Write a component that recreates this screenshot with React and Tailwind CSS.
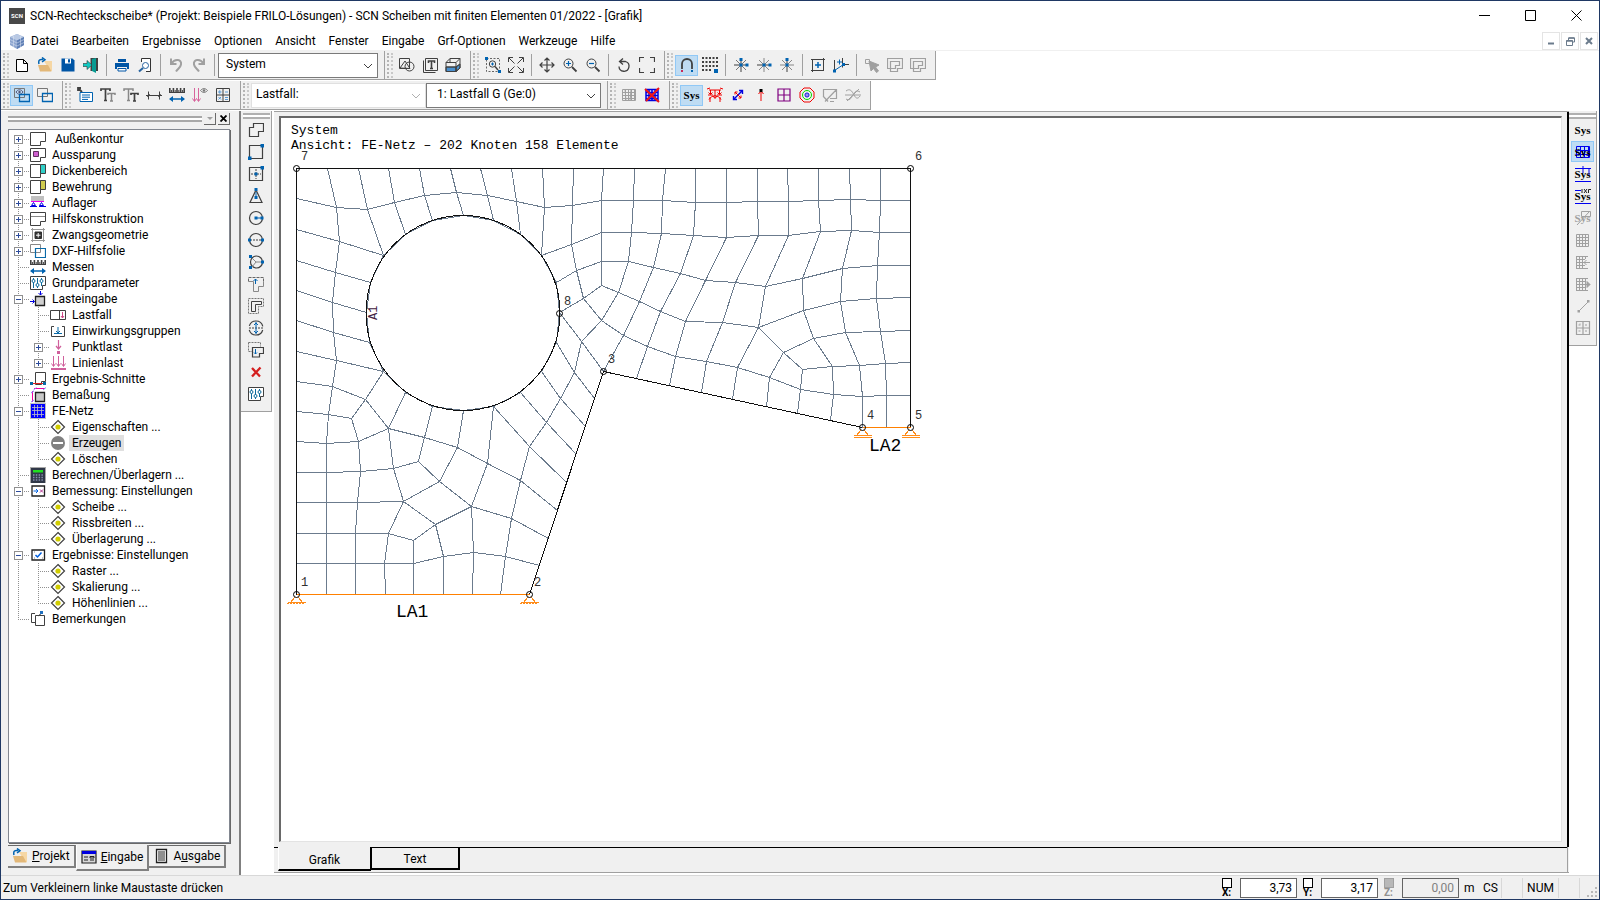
import { useState } from "react";
import clsx from "clsx";

const DARK = "#404040";
const BLUE = "#0063b1";
const GREY = "#a0a0a0";

const Svg = ({ children, stroke = DARK, size = 16 }) => (
  <svg
    width={size}
    height={size}
    viewBox="0 0 16 16"
    fill="none"
    stroke={stroke}
    strokeWidth="1"
    aria-hidden="true"
    className="shrink-0"
  >
    {children}
  </svg>
);

const SysIcon = ({ color = "#000", children }) => (
  <span className="relative flex h-5 w-5 items-center justify-center">
    {children}
    <span
      className="relative font-['Liberation_Serif',serif] text-[11px] leading-4 font-bold"
      style={{ color }}
    >
      Sys
    </span>
  </span>
);

const hash = (x, y, w, h, s) => {
  let d = `M${x} ${y}h${w}v${h}h${-w}z`;
  for (let i = s; i < w; i += s) d += `M${x + i} ${y}v${h}`;
  for (let i = s; i < h; i += s) d += `M${x} ${y + i}h${w}`;
  return d;
};

const plate = "M.5 1.5h15v9h-5v4h-10z";

/* file / view toolbar */
const icons = {
  fileNew: (
    <Svg stroke="#000">
      <path d="M2.500 2.500h7l4 4v8h-11zM9.500 2.500v4h4" fill="#fff" />
    </Svg>
  ),
  fileOpen: (
    <Svg stroke="none">
      <path d="M7 4h8v10h-2z" fill="#f6d7a4" />
      <path d="M1 8h10l3.500 6.500H3z" fill="#e3b878" />
      <path d="M2 7c-1-4 1-5 4-4.500M5 .5l3 2.200-3 2.300" stroke={BLUE} strokeWidth="1.500" />
    </Svg>
  ),
  save: (
    <Svg stroke="none">
      <path d="M1.500 1.500h11l2 2v11h-13z" fill="#0055a5" />
      <path d="M5 1.500h6v5H5z" fill="#fff" />
      <path d="M8 2.200h2v3.300H8z" fill="#0055a5" />
    </Svg>
  ),
  exit: (
    <Svg stroke="none">
      <path d="M7.500 1h7.500v13H7.500z" fill="#404040" />
      <path d="M9 2l4-1v15l-4-2z" fill="#089a92" />
      <path d="M0 6.500h4v-3l5 4.500-5 4.500v-3H0z" fill="#12c8c0" stroke="#333" strokeWidth=".6" />
    </Svg>
  ),
  print: (
    <Svg stroke="none">
      <path d="M4 2h8v3H4zM1 6h14v6h-2v-2H3v2H1z" fill="#0055a5" />
      <path d="M4 11.500h8v2.500H4z" stroke="#0055a5" fill="#fff" />
    </Svg>
  ),
  preview: (
    <Svg>
      <path d="M4.500 5V1.500h9v13H9" fill="#fff" stroke="#333" />
      <circle cx="8.500" cy="8.500" r="3" stroke="#2864a0" fill="#fff" />
      <path d="M6 11l-4 3.500" stroke="#2864a0" strokeWidth="2" />
    </Svg>
  ),
  undo: (
    <Svg stroke={GREY}>
      <path d="M3 1.500v5.500h5.500" strokeWidth="2" />
      <path d="M3.500 6.500C7 1 14 2.500 13 7.500c-.5 3-3 4-5 7" strokeWidth="2" />
    </Svg>
  ),
  redo: (
    <Svg stroke={GREY}>
      <path d="M13 1.500v5.500H7.500" strokeWidth="2" />
      <path d="M12.500 6.500C9 1 2 2.500 3 7.500c.5 3 3 4 5 7" strokeWidth="2" />
    </Svg>
  ),
  shapes: (
    <Svg>
      <path d="M.5 1.500h10v10H.5zM1 11L6 4l5 7.500z" />
      <circle cx="10.500" cy="9.500" r="4.500" />
    </Svg>
  ),
  textBox: (
    <Svg>
      <path d="M3.500 1.500h12v12h-12zM1.500 3.500v12h12" />
      <path d="M6.500 6v-2h6v2M9.500 4v7.500M8 11.500h3" strokeWidth="1.600" />
    </Svg>
  ),
  box3d: (
    <Svg>
      <path d="M1 10h10v4.500H1zM11 10l4-3v4l-4 3.500z" fill="#4a90cf" />
      <path d="M1 5.500h10v9H1zM1 5.500L5 1.500h10v9.500l-4 3.500M11 5.500l4-4M1 10h10l4-3M5 1.500v4" />
    </Svg>
  ),
  zoomWindow: (
    <Svg>
      <path d="M1.500 1.500h13v13h-13z" strokeDasharray="2 1.500" stroke="#666" />
      <circle cx="7.500" cy="7" r="3.200" />
      <path d="M7.500 5.500v3M6 7h3" stroke={BLUE} />
      <path d="M10 9.500l3 3.500" strokeWidth="1.500" />
      <path d="M0 0h3v3H0zM13 13h3v3h-3z" fill={BLUE} stroke="none" />
    </Svg>
  ),
  expand: (
    <Svg>
      <path d="M1 1l5.500 5.500M15 1L9.500 6.500M1 15l5.500-5.500M15 15L9.500 9.500M.5 5V.5H5M11 .5h4.500V5M.5 11v4.500H5M11 15.500h4.500V11" />
    </Svg>
  ),
  move: (
    <Svg>
      <path d="M8 1v14M1 8h14M5.500 3.500L8 1l2.500 2.500M5.500 12.500L8 15l2.500-2.500M3.500 5.500L1 8l2.500 2.500M12.500 5.500L15 8l-2.500 2.500" strokeWidth="1.200" />
    </Svg>
  ),
  zoomIn: (
    <Svg>
      <circle cx="6.500" cy="6.500" r="4.500" />
      <path d="M6.500 4v5M4 6.500h5" stroke={BLUE} strokeWidth="1.200" />
      <path d="M10 10l4.500 4.500" strokeWidth="1.800" />
    </Svg>
  ),
  zoomOut: (
    <Svg>
      <circle cx="6.500" cy="6.500" r="4.500" />
      <path d="M4 6.500h5" stroke={BLUE} strokeWidth="1.200" />
      <path d="M10 10l4.500 4.500" strokeWidth="1.800" />
    </Svg>
  ),
  rotate: (
    <Svg>
      <path d="M4.500 4.500h5a5 5 0 1 1-6.500 5M7 1.500L3.500 4.500 7 7.500" strokeWidth="1.300" />
    </Svg>
  ),
  fullscreen: (
    <Svg>
      <path d="M.5 5V.5H5M11 .5h4.500V5M15.500 11v4.500H11M5 15.500H.5V11" strokeWidth="1.200" />
    </Svg>
  ),
  magnet: (
    <Svg>
      <path d="M3 12V7a5 5 0 0 1 10 0v5" strokeWidth="1.800" />
      <path d="M2 13h2v2H2z" fill="#c8285a" stroke="none" />
      <path d="M12 13h2v2h-2z" fill={BLUE} stroke="none" />
    </Svg>
  ),
  dots: (
    <Svg>
      <path d="M0 1h16M0 5h16M0 9h16M0 13h10" strokeWidth="2" strokeDasharray="2 1.500" />
      <path d="M12 12h4v4h-4z" fill={BLUE} stroke="none" />
    </Svg>
  ),
  starAxes: (
    <Svg stroke="#777">
      <path d="M3 3l10 10M13 3L3 13" />
      <path d="M8 1v14M1 8h14" stroke={DARK} />
      <path d="M6.500 1h3v3h-3zM6.500 6.500h3v3h-3zM12.500 6.500h3v3h-3z" fill={BLUE} stroke="none" />
    </Svg>
  ),
  starH: (
    <Svg stroke="#888">
      <path d="M3 3l10 10M13 3L3 13M8 1v14" />
      <path d="M1 8h14" stroke={DARK} />
      <path d="M6.500 6.500h3v3h-3zM12.500 6.500h3v3h-3z" fill={BLUE} stroke="none" />
    </Svg>
  ),
  starV: (
    <Svg stroke="#888">
      <path d="M3 3l10 10M13 3L3 13M1 8h14" />
      <path d="M8 1v14" stroke={DARK} />
      <path d="M6.500 1h3v3h-3zM6.500 6.500h3v3h-3z" fill={BLUE} stroke="none" />
    </Svg>
  ),
  frameAdd: (
    <Svg>
      <path d="M1 2.500h14M13.500 1v13M2.500 3v12M1 13.500h12" />
      <path d="M8 5v6M5 8h6" stroke={BLUE} strokeWidth="1.500" />
    </Svg>
  ),
  axisAdd: (
    <Svg>
      <path d="M1.500 3v11.500M9.500 1v6.500H16M9.500 7.500v3" />
      <path d="M1.500 13.500l9-6M6.500 2.500v5M4 5h5" stroke={BLUE} />
      <path d="M9 6h3v3H9zM0 12.500h3v3H0z" fill={BLUE} stroke="none" />
    </Svg>
  ),
  pick: (
    <Svg stroke={GREY}>
      <path d="M1.500 2.500h4v4h-4z" />
      <path d="M5 4l10 4-3.500 2 3 4-2 1.500-3-4L7 14z" fill={GREY} />
    </Svg>
  ),
  plateGrey: (
    <Svg stroke={GREY}>
      <path d="M.5 1.500h15v10h-5v3h-7v-3h-3zM3.500 4.500h9v4h-4v3h-5z" strokeWidth="1.200" />
    </Svg>
  ),

  /* second row */
  layersEye: (
    <Svg>
      <path d="M.5 1.500h10v9H.5z" stroke="#777" />
      <path d="M2 5c2-3 5-3 7 0-2 3-5 3-7 0z" stroke="#557" />
      <circle cx="5.500" cy="5" r="1.200" fill="#557" stroke="none" />
      <path d="M5.500 7.500h10v7h-10z" stroke={BLUE} strokeWidth="1.300" />
    </Svg>
  ),
  layers: (
    <Svg>
      <path d="M.5 1.500h10v8H.5z" stroke="#777" />
      <path d="M5.500 6.500h10v8h-10z" stroke={BLUE} strokeWidth="1.300" />
    </Svg>
  ),
  note: (
    <Svg>
      <path d="M1 1l4 4M1 4V1h3" strokeWidth="1.800" />
      <path d="M3 5.500h12.500v9H3zM5 8h8M5 10.200h8M5 12.400h6" stroke={BLUE} fill="#fff" />
    </Svg>
  ),
  fontBig: (
    <Svg>
      <path d="M1 4V2h9v2M5.500 2v11.500M4 13.500h3" strokeWidth="1.700" />
      <path d="M8 8V6.500h7V8M11.500 6.500V14M10 14h3" strokeWidth="1.500" stroke="#888" />
    </Svg>
  ),
  fontSmall: (
    <Svg>
      <path d="M1 4V2h9v2M5.500 2v11.500M4 13.500h3" strokeWidth="1.500" stroke="#888" />
      <path d="M8 8V6.500h7V8M11.500 6.500V14M10 14h3" strokeWidth="1.700" />
    </Svg>
  ),
  dimension: (
    <Svg>
      <path d="M0 8.500h16M2.500 4.500v8M13.500 4.500v8" />
      <path d="M1 10l3-3M12 10l3-3" strokeWidth=".7" />
    </Svg>
  ),
  ruler: (
    <Svg>
      <path d="M.8 1v5M4.400 1v5M8 1v5M11.600 1v5M15.200 1v5" strokeWidth="1.600" />
      <path d="M2.600 3v3M6.200 3v3M9.800 3v3M13.400 3v3" />
      <path d="M0 5.500h16" />
      <path d="M1 12h14" stroke={BLUE} strokeWidth="1.500" />
      <path d="M4 9l-4 3 4 3zM12 9l4 3-4 3z" fill={BLUE} stroke="none" />
    </Svg>
  ),
  loadsEye: (
    <Svg stroke="#d8649c">
      <path d="M2.500 1v13M6.500 1v13M.5 11.500l2 3 2-3M4.500 11.500l2 3 2-3" />
      <path d="M8.500 3.500c2-2.500 5-2.500 7 0-2 2.500-5 2.500-7 0z" stroke="#777" />
      <circle cx="12" cy="3.500" r="1.200" fill="#777" stroke="none" />
    </Svg>
  ),
  calc: (
    <Svg>
      <path d="M1.500 1.500h13v13h-13zM8 1.500v13M1.500 8h13" />
      <path d="M3 5h3.500M4.800 3.200v3.500M10 5h3M3.500 10l2.500 2.500M6 10l-2.500 2.500M10 10.500h3M10 12.500h3" stroke="#5a9bd5" />
    </Svg>
  ),
  meshGrey: (
    <Svg stroke={GREY}>
      <path d={hash(1.5, 2.5, 13, 11, 3)} />
      <path d="M4 2l1 12M10 3l-1 11" />
    </Svg>
  ),
  meshDelete: (
    <Svg stroke="#0000e0">
      <path d={hash(2, 2.5, 12, 11, 3)} strokeWidth="1.500" />
      <path d="M1 2l14 13M15 1L2 14" stroke="#f01414" strokeWidth="2" />
    </Svg>
  ),
  loadsRed: (
    <Svg stroke="#f00000">
      <path d="M2 3h12M3.500 3v4M8 3v8M12.500 3v4M1 8h5M10 8h5M2 12.500c3-5 9-5 12 0M1.500 5.500l2 2 2-2M6 9l2 2.500L10 9M10.500 5.500l2 2 2-2M3 10v5M13 10v5M0 2l3-1M13 1l3 1" />
    </Svg>
  ),
  stress: (
    <Svg stroke="#0000e0">
      <path d="M4 12L12 4M9 3.500h3.500V7M3.500 9v3.500H7" strokeWidth="1.400" />
      <path d="M5 5l6 6M5 7.500V5h2.500M8.500 11H11V8.500" stroke="#f00000" />
    </Svg>
  ),
  arrowUp: (
    <Svg stroke="#f00000">
      <path d="M8 4v10M5.500 7L8 4l2.500 3" />
      <path d="M6.500 2h3v3h-3z" fill="#000" stroke="none" />
    </Svg>
  ),
  windowGrid: (
    <Svg stroke="#800080">
      <path d="M2 2h12v12H2zM8 2v12M2 8h12" strokeWidth="1.200" />
    </Svg>
  ),
  contour: (
    <Svg stroke="#f00000">
      <path d="M5 1h6l4 4v6l-4 4H5l-4-4V5z" strokeLinejoin="round" />
      <circle cx="8" cy="8" r="4.500" stroke="#00d800" />
      <circle cx="8" cy="8" r="2" stroke="#0000e0" />
      <circle cx="8" cy="8" r=".7" fill="#0000e0" stroke="none" />
    </Svg>
  ),
  chartGrey: (
    <Svg stroke={GREY}>
      <path d="M1.500 10V2.500h13v9H8M3 14.500l11.500-12M1 9l5 5.500M8 14.500h4" strokeWidth="1.200" />
    </Svg>
  ),
  curvesGrey: (
    <Svg stroke={GREY}>
      <path d="M0 8h16M1 4c4-3 6 0 8 4s4 4 6 1M1 12c3 2 5 0 7-4s4-5 7-3M2 14L14 2" />
    </Svg>
  ),

  /* drawing toolbar */
  polyPlate: (
    <Svg>
      <path d="M5.500 1.500h10v8h-5v5h-9v-9h4z" strokeWidth="1.200" />
    </Svg>
  ),
  rect2: (
    <Svg>
      <path d="M1.500 1.500h13v13h-13z" strokeWidth="1.200" />
      <path d="M12.500 0H16v3.500h-3.500zM0 12.500h3.500V16H0z" fill={BLUE} stroke="none" />
    </Svg>
  ),
  rectCenter: (
    <Svg>
      <path d="M1.500 1.500h13v13h-13z" strokeWidth="1.200" />
      <path d="M3 8h10M8 3v10" strokeDasharray="2 1" />
      <path d="M6.500 6.500h3v3h-3zM12.500 0H16v3.500h-3.500z" fill={BLUE} stroke="none" />
    </Svg>
  ),
  triangle: (
    <Svg>
      <path d="M8 2l6 12.500H2z" strokeWidth="1.200" />
      <path d="M8 4v6" stroke={BLUE} />
      <path d="M6.500 0h3v3h-3zM6.500 8h3v3h-3z" fill={BLUE} stroke="none" />
    </Svg>
  ),
  circleRadius: (
    <Svg>
      <circle cx="8" cy="8" r="6.500" strokeWidth="1.200" />
      <path d="M8 8h6" stroke={BLUE} />
      <path d="M6.500 6.500h3v3h-3zM12.500 6.500h3v3h-3z" fill={BLUE} stroke="none" />
    </Svg>
  ),
  circleDiameter: (
    <Svg>
      <circle cx="8" cy="8" r="6.500" strokeWidth="1.200" />
      <path d="M2 8h12" strokeDasharray="2 1" />
      <path d="M0 6.500h3v3H0zM13 6.500h3v3h-3z" fill={BLUE} stroke="none" />
    </Svg>
  ),
  circle3: (
    <Svg>
      <circle cx="8.500" cy="8" r="6" strokeWidth="1.200" />
      <path d="M4 4l4 4h5M8 8l-4 5" stroke="#888" />
      <path d="M1 1h3v3H1zM13 6.500h3v3h-3zM1 12h3v3H1z" fill={BLUE} stroke="none" />
    </Svg>
  ),
  plateArrow: (
    <Svg stroke="#888">
      <path d="M.5 5.500v-4h15v4" stroke="#666" strokeDasharray="3 1" />
      <path d="M.5 5.500h5v10h5v-5h5v-5" />
      <path d="M7.500 8V3M5.500 5l2-2 2 2" stroke={BLUE} />
    </Svg>
  ),
  plateOffset: (
    <Svg>
      <path d="M.5.5h15v8h-5v7H.5z" strokeDasharray="2 1" stroke="#777" />
      <path d="M3.500 3.500h10v3h-6v7h-4z" />
    </Svg>
  ),
  circleSplit: (
    <Svg>
      <circle cx="8" cy="8" r="7" strokeWidth="1.200" strokeDasharray="18 4" strokeDashoffset="-2" />
      <path d="M1 8h14" strokeDasharray="2 1" />
      <path d="M8 2v12M6 5l2-2 2 2M6 11l2 2 2-2" stroke={BLUE} />
    </Svg>
  ),
  plateMove: (
    <Svg>
      <path d="M.5.5h12v4M.5.5v9h4" strokeDasharray="2 1" stroke="#777" />
      <path d="M4.500 5.500h11v6h-4v3.500h-7z" strokeWidth="1.200" />
      <path d="M7.500 7v5M6 10.500l1.500 1.500L9 10.500" stroke={BLUE} />
    </Svg>
  ),
  deleteRed: (
    <Svg stroke="#d42020">
      <path d="M4 4l8 8.500M12.500 3.500L4 12.500" strokeWidth="2.300" />
    </Svg>
  ),
  params: (
    <Svg>
      <path d="M.5 1.500h15v9h-3v4H.5z" fill="#fff" />
      <path d="M3.500 3v10M7.500 3v10M11.500 3v8" stroke="#0a6a9c" />
      <circle cx="3.500" cy="6" r="1.500" stroke="#0a6a9c" fill="#fff" />
      <circle cx="7.500" cy="10" r="1.500" stroke="#0a6a9c" fill="#fff" />
      <circle cx="11.500" cy="6" r="1.500" stroke="#0a6a9c" fill="#fff" />
    </Svg>
  ),
  gridGrey: (
    <Svg stroke={GREY}>
      <path d={hash(1.5, 2.5, 12, 12, 3)} />
    </Svg>
  ),
  gridIn: (
    <Svg stroke={GREY}>
      <path d="M1.500 2v12.500M4.500 2v12.500M7.500 2v12.500M10.500 2v3M1 2.500h12M1 5.500h9M1 8.500h14M1 11.500h9M1 14.500h12M11.500 6L9 8.500l2.500 2.500" />
    </Svg>
  ),
  gridOut: (
    <Svg stroke={GREY}>
      <path d="M1.500 2v12.500M4.500 2v12.500M7.500 2v12.500M10.500 2v12M1 2.500h12M1 5.500h9M1 8.500h14M1 11.500h9M1 14.500h12" />
      <path d="M12 5.500l3 3-3 3z" fill={GREY} />
    </Svg>
  ),
  lineGrey: (
    <Svg stroke={GREY}>
      <path d="M4 13l9-9" />
      <path d="M2.500 12h2.500v2.500H2.500zM12 2h2.500v2.500H12z" fill={GREY} stroke="none" />
    </Svg>
  ),
  tableGrey: (
    <Svg stroke={GREY}>
      <path d="M1.500 1.500h13v13h-13zM8 1.500v13M1.500 8h13" strokeWidth="1.200" />
      <path d="M3.500 5h2M5 3.500v1M10 5h2M10 11h2M3.500 11h2" />
    </Svg>
  ),

  /* tree */
  plate: (
    <Svg>
      <path d={plate} fill="#fff" />
    </Svg>
  ),
  plateHole: (
    <Svg>
      <path d={plate} fill="#fff" />
      <path d="M3.500 4.500h5v5h-5z" fill="#d060d0" stroke="#603060" />
    </Svg>
  ),
  plateCyan: (
    <Svg>
      <path d="M.5 1.500h10v13H.5z" fill="#fff" />
      <path d="M10.500 1.500h5v9h-5z" fill="#30d0c8" />
    </Svg>
  ),
  plateOlive: (
    <Svg>
      <path d="M.5 1.500h10v13H.5z" fill="#fff" />
      <path d="M10.500 1.500h5v9h-5z" fill="#d0cc50" />
    </Svg>
  ),
  support: (
    <Svg stroke="#0000e0">
      <path d="M1 1h13v5H1z" fill="#c0c0c0" stroke="none" />
      <path d="M1 6.500h13" stroke="#f000f0" />
      <path d="M3.500 7.500l-2 3h4zM11.500 7.500l-2 3h4zM0 11.500h7M9 11.500h7" />
    </Svg>
  ),
  plateLine: (
    <Svg>
      <path d={plate} fill="#fff" />
      <path d="M1 5.500h14" stroke="#888" />
    </Svg>
  ),
  constraint: (
    <Svg stroke="#999">
      <path d="M1 2.500h14M1 13.500h14M2.500 1v14M13.500 1v14" />
      <path d="M5 5h6.500v6.500H5z" fill="#303030" stroke="#303030" />
      <path d="M8.200 6v4.500M6 8.200h4.500" stroke="#fff" />
    </Svg>
  ),
  dxf: (
    <Svg>
      <path d="M.5 1.500h10v8H.5z" stroke="#888" />
      <path d="M5.500 5.500h10v9h-10z" stroke="#0a6aa8" strokeWidth="1.200" />
    </Svg>
  ),
  loadInput: (
    <Svg stroke="#0000e0">
      <path d="M5.500 5.500h9v9h-9z" fill="#d0d0d0" stroke="#202020" strokeWidth="1.300" />
      <path d="M10.500 0v4M8.500 2l2 2 2-2M0 10.500h4.500M2.500 8.500l2 2-2 2" />
    </Svg>
  ),
  loadCase: (
    <Svg>
      <path d="M.5 3.500h15v9H.5zM9.500 3.500v9" fill="#fff" />
      <path d="M12.500 5v6M11 9l1.500 2L14 9" stroke="#d04888" />
    </Svg>
  ),
  loadGroup: (
    <Svg>
      <path d="M4 3.500H1.500v10h13v-10H12" />
      <path d="M8 4v6M6 8l2 2 2-2M4 10.500h8" stroke="#0a6aa8" />
    </Svg>
  ),
  pointLoad: (
    <Svg stroke="#d0609c">
      <path d="M8.500 1v9M6 7l2.500 3L11 7" strokeWidth="1.200" />
      <path d="M7 12h3v3H7z" fill="#d0609c" stroke="none" />
    </Svg>
  ),
  lineLoad: (
    <Svg stroke="#d0609c">
      <path d="M3.500 1v10M8.500 1v10M13.500 1v10M1.500 8.500l2 3 2-3M6.500 8.500l2 3 2-3M11.500 8.500l2 3 2-3" />
      <path d="M1 14h15" strokeWidth="2" />
    </Svg>
  ),
  section: (
    <Svg>
      <path d="M5.500 1.500h10v9h-4v3h-6z" fill="#fff" />
      <path d="M1 12.500h14" stroke="#e02020" />
      <path d="M0 11h3v3H0zM13 11h3v3h-3z" fill="#0a6aa8" stroke="none" />
    </Svg>
  ),
  dimIcon: (
    <Svg stroke="#f000a0">
      <path d="M5.500 5.500h9v9h-9z" fill="#c8c8c8" stroke="#202020" strokeWidth="1.300" />
      <path d="M4 1.500h11M2.500 4v11" />
      <path d="M3.500 3l3-2.500M13 3l3-2.500M1 6l3-2M1 15l3-2" stroke="#8888ff" />
    </Svg>
  ),
  feMesh: (
    <Svg stroke="#c0c0c0">
      <path d="M0 0h16v16H0z" fill="#c0c0c0" stroke="none" />
      <path d="M1 1h14v14H1z" fill="#0000ff" stroke="none" />
      <path d="M2 4.500h12M2 7.500h12M2 11.500h12M4.500 2v12M7.500 2v12M11.500 2v12" strokeWidth=".8" />
    </Svg>
  ),
  diamond: (
    <Svg>
      <path d="M8 1.500l6.500 6.500L8 14.500 1.500 8z" fill="#fff" strokeWidth="1.200" />
      <circle cx="8" cy="8" r="2.600" fill="#d0cc00" stroke="none" />
    </Svg>
  ),
  minusDisc: (
    <Svg stroke="none">
      <circle cx="8" cy="8" r="7" fill="#808080" />
      <path d="M3 7h10v2H3z" fill="#fff" />
    </Svg>
  ),
  calculator: (
    <Svg stroke="none">
      <path d="M0 0h16v16H0z" fill="#a8a8a8" />
      <path d="M1 1h14v15H1z" fill="#303848" />
      <path d="M3 3h10v2.500H3z" fill="#20e020" />
      <path d="M3 8h10M3 10.500h10M3 13h10" stroke="#8890b0" strokeWidth="1.300" strokeDasharray="1.500 1.300" />
    </Svg>
  ),
  design: (
    <Svg stroke="#202020">
      <path d="M2 3h12.500v10H2z" fill="#fff" strokeWidth="1.300" />
      <path d="M3.500 8H8M6 6l2 2-2 2" stroke="#0060e0" />
      <path d="M10 6.500l3 3M13 6.500l-3 3" stroke="#b03090" />
    </Svg>
  ),
  results: (
    <Svg stroke="#202020">
      <path d="M2 3h12.500v10H2z" fill="#fff" strokeWidth="1.300" />
      <path d="M5.500 8l2 2 4-4.500" stroke="#0060e0" strokeWidth="1.500" />
      <path d="M4 5h1M4 11h1M12 11h1" stroke="#888" />
    </Svg>
  ),
  remarks: (
    <Svg>
      <path d="M5 2.500H1.500v9H5" />
      <path d="M5.500 4.500h9v10h-9z" fill="#fff" />
      <path d="M8 5l4-3" />
      <path d="M10 0h3v3h-3z" fill="#2070c0" stroke="none" />
    </Svg>
  ),
  form: (
    <Svg stroke="#202020">
      <path d="M1 2h14v12H1z" fill="#d8d8d8" strokeWidth="1.200" />
      <path d="M1 2h14v3H1z" fill="#0000e0" stroke="none" />
      <path d="M3 8h4M3 11h4M9 7.500h4v1.500H9zM9 11h4" />
    </Svg>
  ),
  page: (
    <Svg stroke="#202020">
      <path d="M3.500 1.500h10v13h-10z" fill="#fff" strokeWidth="1.300" />
      <path d="M5 4h7M5 6h7M5 8h7M5 10h7M5 12h7" />
    </Svg>
  ),
};

const toolRowOne = [
  {
    combo: true,
    items: [
      ["fileNew", "Neu"], ["fileOpen", "Öffnen"], ["save", "Speichern"], ["exit", "Beenden"], null,
      ["print", "Drucken"], ["preview", "Seitenansicht"], null,
      ["undo", "Rückgängig"], ["redo", "Wiederholen"], null,
    ],
  },
  { wide: true, items: [["shapes", "Formen"], ["textBox", "Textfeld"], ["box3d", "3D"]] },
  {
    wide: true,
    items: [
      ["zoomWindow", "Zoomfenster"], ["expand", "Alles zeigen"], null,
      ["move", "Verschieben"], ["zoomIn", "Vergrößern"], ["zoomOut", "Verkleinern"], null,
      ["rotate", "Zurück"], ["fullscreen", "Vollbild"],
    ],
  },
  {
    wide: true,
    items: [
      ["magnet", "Fang", true], ["dots", "Raster"], null,
      ["starAxes", "Achsen"], ["starH", "Horizontal"], ["starV", "Vertikal"], null,
      ["frameAdd", "Rahmen"], ["axisAdd", "Achse"], null,
      ["pick", "Auswahl"], ["plateGrey", "Kontur A"], ["plateGrey", "Kontur B"],
    ],
  },
];

const resultTools = [
  ["loadsRed", "Lasten"], ["stress", "Spannungen"], ["arrowUp", "Auflagerkraft"],
  ["windowGrid", "Fenster"], ["contour", "Isolinien"], ["chartGrey", "Schnitt"], ["curvesGrey", "Kurven"],
];

const drawTools = [
  ["polyPlate", "Polygon"], ["rect2", "Rechteck"], ["rectCenter", "Rechteck Mitte"], ["triangle", "Dreieck"],
  ["circleRadius", "Kreis Radius"], ["circleDiameter", "Kreis Durchmesser"], ["circle3", "Kreis 3 Punkte"],
  ["plateArrow", "Kante"], ["plateOffset", "Versatz"], ["circleSplit", "Teilen"], ["plateMove", "Kopieren"],
  ["deleteRed", "Entfernen"], ["params", "Parameter"],
];

const tree = [
  { label: "\u00a0Außenkontur", icon: "plate", box: "+" },
  { label: "Aussparung", icon: "plateHole", box: "+" },
  { label: "Dickenbereich", icon: "plateCyan", box: "+" },
  { label: "Bewehrung", icon: "plateOlive", box: "+" },
  { label: "Auflager", icon: "support", box: "+" },
  { label: "Hilfskonstruktion", icon: "plateLine", box: "+" },
  { label: "Zwangsgeometrie", icon: "constraint", box: "+" },
  { label: "DXF-Hilfsfolie", icon: "dxf", box: "+" },
  { label: "Messen", icon: "ruler" },
  { label: "Grundparameter", icon: "params" },
  {
    label: "Lasteingabe", icon: "loadInput", box: "-",
    children: [
      { label: "Lastfall", icon: "loadCase" },
      { label: "Einwirkungsgruppen", icon: "loadGroup" },
      { label: "Punktlast", icon: "pointLoad", box: "+" },
      { label: "Linienlast", icon: "lineLoad", box: "+" },
    ],
  },
  { label: "Ergebnis-Schnitte", icon: "section", box: "+" },
  { label: "Bemaßung", icon: "dimIcon" },
  {
    label: "FE-Netz", icon: "feMesh", box: "-",
    children: [
      { label: "Eigenschaften ...", icon: "diamond" },
      { label: "Erzeugen", icon: "minusDisc" },
      { label: "Löschen", icon: "diamond" },
    ],
  },
  { label: "Berechnen/Überlagern ...", icon: "calculator" },
  {
    label: "Bemessung: Einstellungen", icon: "design", box: "-",
    children: [
      { label: "Scheibe ...", icon: "diamond" },
      { label: "Rissbreiten ...", icon: "diamond" },
      { label: "Überlagerung ...", icon: "diamond" },
    ],
  },
  {
    label: "Ergebnisse: Einstellungen", icon: "results", box: "-",
    children: [
      { label: "Raster ...", icon: "diamond" },
      { label: "Skalierung ...", icon: "diamond" },
      { label: "Höhenlinien ...", icon: "diamond" },
    ],
  },
  { label: "Bemerkungen", icon: "remarks" },
];

const menu = [
  "Datei", "Bearbeiten", "Ergebnisse", "Optionen", "Ansicht",
  "Fenster", "Eingabe", "Grf-Optionen", "Werkzeuge", "Hilfe",
];

/* finite element mesh, every entry is one polyline */
const meshLines = [
  "296,198 336,207 367,209 394,202 424,195 456,192 487,195 516,201 544,207 572,205 601,200 633,200 662,200 695,202 726,202 757,201 788,201 818,200 850,199 880,200 910,200",
  "327,168 336,207 339,241 335,272 332,302 333,332 336,360 332,386 328,414 326,443 326,472 326,563 326,594",
  "358,168 367,209 383,255",
  "388,168 394,202 405,234",
  "419,168 424,195 432,220",
  "450,168 456,192 463,215",
  "480,168 487,195 493,220",
  "511,168 516,201 520,234",
  "542,168 544,207 541,255",
  "573,168 572,205 571,244 576,270 583,298 601,320 623,335 647,346 675,356 706,361 737,367 769,377 800,389 833,394 862,396 886,395 910,395",
  "603,168 601,200 601,232 601,261 601,285 583,298 559,312 581,341 603,371",
  "634,168 633,200 631,232 628,261 618,292 601,320 581,341 574,372 560,398 546,422 529,446 520,480 511,518 505,556 500,594",
  "665,168 662,200 661,233 653,267 639,301 623,335 603,371",
  "695,168 695,202 693,235 680,273 660,311 647,346 636,378",
  "726,168 726,202 726,237 705,280 685,321 675,356 669,385",
  "757,168 757,201 758,235 735,282 722,322 706,361 701,392",
  "787,168 788,201 788,235 765,286 758,327 737,367 732,399",
  "818,168 818,200 820,231 802,278 803,310 813,338 832,366 833,394 830,420",
  "849,168 850,199 851,230 842,268 840,301 845,332 859,365 862,396 862,427",
  "880,168 880,200 879,232 877,265 876,298 880,331 885,363 886,395 886,427",
  "541,255 571,244 601,232 631,232 661,233 693,235 726,237 758,235 788,235 820,231 851,230 879,232 910,232",
  "556,282 576,270 601,261 628,261 653,267 680,273 705,280 735,282 765,286 802,278 842,268 877,265 910,265",
  "601,285 618,292 639,301 660,311 685,321 722,322 758,327 803,310 840,301 876,298 910,297",
  "758,327 783,352 802,369 832,366 859,365 885,363 910,362",
  "802,369 800,389 797,413",
  "766,407 769,377 783,352 813,338 845,332 880,331 910,330",
  "296,229 339,241 383,255",
  "296,260 335,272 370,282",
  "296,290 332,302 366,312",
  "296,320 333,332 369,342",
  "296,351 336,360 383,371 365,399 351,418 358,441 360,471 357,502 355,533 355,594",
  "296,381 332,386 365,399 388,428 424,437 457,447 487,463 520,480 557,510",
  "296,411 328,414 351,418",
  "296,441 326,443 358,441 388,428",
  "405,392 388,428 393,468 403,501 388,533 384,563 385,594",
  "296,472 326,472 360,471 393,468 418,461 424,437 432,406",
  "418,461 439,481 471,506 511,518 548,538",
  "463,410 457,447 439,481 403,501 435,524 443,556 443,594",
  "296,502 357,502 403,501",
  "296,533 355,533 388,533 413,540 435,524 471,506 487,463 493,406",
  "413,540 413,563 413,594",
  "471,506 473,552 472,594",
  "493,406 529,446 566,482",
  "296,563 413,563 443,556 473,552 505,556 539,565",
  "520,392 546,422 576,454",
  "541,371 560,398 585,426",
  "556,342 574,372 594,398",
  "463,215 432,220 405,234 383,255 370,282 366,312 369,342 383,371 405,392 432,406 463,410 493,406 520,392 541,371 556,342 559,312 556,282 541,255 520,234 493,220 463,215",
];

const nodes = [
  { n: 1, x: 296, y: 594, tx: 301, ty: 586 },
  { n: 2, x: 529, y: 594, tx: 534, ty: 586 },
  { n: 3, x: 603, y: 371, tx: 608, ty: 363 },
  { n: 4, x: 862, y: 427, tx: 867, ty: 419 },
  { n: 5, x: 910, y: 427, tx: 915, ty: 419 },
  { n: 6, x: 910, y: 168, tx: 915, ty: 160 },
  { n: 7, x: 296, y: 168, tx: 301, ty: 160 },
  { n: 8, x: 559, y: 313, tx: 564, ty: 305 },
];

const Grip = ({ wide }) => (
  <span className={clsx("flex h-full shrink-0 items-center gap-[2px] pl-[2px]", wide ? "w-[10px]" : "w-[9px]")}>
    <span className="h-[25px] border-l-2 border-dotted border-[#b4b4b4]" />
    <span className="h-[25px] border-l-2 border-dotted border-[#c8c8c8]" />
  </span>
);

const Tool = ({ icon, label, active, children }) => (
  <button
    type="button"
    aria-label={label}
    className={clsx(
      "flex h-[21px] w-[23px] shrink-0 items-center justify-center border",
      active ? "border-[#90c8f6] bg-[#bfdcf3]" : "border-transparent"
    )}
  >
    {children || icons[icon]}
  </button>
);

const Sep = () => (
  <span className="flex h-[22px] w-2 shrink-0 justify-center">
    <span className="w-px bg-[#a0a0a0]" />
  </span>
);

const Group = ({ wide, children }) => (
  <div className="flex h-[29px] shrink-0 items-center border-r border-b border-[#a0a0a0] bg-[#f0f0f0] pr-[6px]">
    <Grip wide={wide} />
    {children}
  </div>
);

const Combo = ({ label, value, className, arrow = "#404040" }) => (
  <span className={clsx("relative flex h-[25px] shrink-0 items-center", className)}>
    <select aria-label={label} className="h-full w-full appearance-none bg-transparent pb-[2px] outline-none">
      <option>{value}</option>
    </select>
    <svg width="10" height="6" viewBox="0 0 10 6" className="pointer-events-none absolute right-1 bottom-2">
      <path d="M1 1l4 4 4-4" fill="none" stroke={arrow} />
    </svg>
  </span>
);

const Branch = ({ up, down, side, box }) => (
  <svg width="20" height="16" viewBox="0 0 20 16" className="shrink-0" shapeRendering="crispEdges" fill="none" stroke="#909090">
    {up && <path d="M9.500 0v8" strokeDasharray="1 1" />}
    {down && <path d="M9.500 8v8" strokeDasharray="1 1" />}
    {side && <path d="M9 8.500h11" strokeDasharray="1 1" />}
    {box && <path d="M5.500 4.500h8v8h-8z" fill="#fff" />}
    {box && <path d="M7 8.500h5" stroke="#2b4a9b" />}
    {box === "+" && <path d="M9.500 6v5" stroke="#2b4a9b" />}
  </svg>
);

const TreePanel = () => {
  const [selected, setSelected] = useState("Erzeugen");

  const label = (item) => (
    <button
      type="button"
      onClick={() => setSelected(item.label)}
      className={clsx("ml-[3px] px-[3px] leading-4 whitespace-nowrap", selected === item.label && "bg-[#e0e0e0]")}
    >
      {item.label}
    </button>
  );

  return (
    <ul className="min-h-0 flex-1 overflow-hidden border border-[#828790] bg-white pt-px shadow-[1px_1px_0_#696969]">
      {tree.map((item, i) => {
        const last = i === tree.length - 1;
        return (
          <li key={item.label}>
            <div className="flex h-4 items-center">
              <Branch up={i > 0} down={!last} side box={item.box} />
              <span className="w-px" />
              {icons[item.icon]}
              {label(item)}
            </div>
            {item.children && (
              <ul>
                {item.children.map((child, k) => (
                  <li key={child.label} className="flex h-4 items-center">
                    <Branch up down />
                    <Branch up down={k < item.children.length - 1} side box={child.box} />
                    <span className="w-px" />
                    {icons[child.icon]}
                    {label(child)}
                  </li>
                ))}
              </ul>
            )}
          </li>
        );
      })}
    </ul>
  );
};

const SideTab = ({ icon, pre, hot, rest, active }) => (
  <button
    type="button"
    className={clsx(
      "flex items-center gap-1 border-r-2 border-b-2 border-[#808080] bg-[#f0f0f0] px-1 whitespace-nowrap",
      active ? "h-[26px] border-l border-l-white" : "h-[23px] border-t border-t-[#696969]"
    )}
  >
    {icons[icon]}
    <span>
      {pre}
      <u>{hot}</u>
      {rest}
    </span>
  </button>
);

const LeftDock = () => (
  <aside className="flex w-[240px] shrink-0 flex-col border-r-2 border-[#808080] bg-[#f0f0f0] pt-[2px] pr-[9px] pb-[4px] pl-[7px]">
    <div className="mb-[4px] flex h-[12px] items-center gap-[2px]">
      <span className="h-[6px] flex-1 border-y-2 border-[#a8a8a8] bg-white" />
      <button type="button" aria-label="Menü" className="flex h-[12px] w-[12px] items-center justify-center border-r border-b border-[#696969]">
        <svg width="6" height="3" viewBox="0 0 6 3"><path d="M0 0h6L3 3z" fill="#a0a0a0" /></svg>
      </button>
      <button type="button" aria-label="Schließen" className="flex h-[12px] w-[12px] items-center justify-center border-r border-b border-[#696969]">
        <svg width="7" height="7" viewBox="0 0 7 7"><path d="M.5.5l6 6M6.500.5l-6 6" stroke="#000" strokeWidth="1.800" /></svg>
      </button>
    </div>
    <TreePanel />
    <div className="mt-[2px] flex h-[26px] items-start">
      <SideTab icon="fileOpen" hot="P" rest="rojekt" />
      <SideTab icon="form" hot="E" rest="ingabe" active />
      <SideTab icon="page" pre="A" hot="u" rest="sgabe" />
    </div>
  </aside>
);

const DockGrip = () => <span className="h-[6px] w-[27px] shrink-0 border-y-2 border-[#b0b0b0] bg-white" />;

const Support = ({ x, y, hatched }) => (
  <g stroke="#ff8c1a" fill="none">
    <path d={`M${x - 2} ${y + 3}l-4 5M${x + 2} ${y + 3}l4 5M${x - 9} ${y + 8}h18`} />
    {hatched ? (
      <path d={`M${x - 10} ${y + 9}h18`} strokeDasharray="2 1" />
    ) : (
      <path d={`M${x - 9} ${y + 10}h18`} />
    )}
  </g>
);

const Drawing = () => (
  <svg
    width="700"
    height="520"
    viewBox="281 118 700 520"
    className="block font-['Liberation_Mono',monospace]"
    role="img"
    aria-label="FE-Netz"
  >
    <g fill="none" stroke="#6b7b8d" shapeRendering="crispEdges" transform="translate(.5 .5)">
      {meshLines.map((pts) => (
        <polyline key={pts} points={pts} />
      ))}
    </g>
    <g fill="none" stroke="#101010" shapeRendering="crispEdges" transform="translate(.5 .5)">
      <path d="M296 594V168H910V427M529 594L603 371L862 427" />
      <ellipse cx="462.500" cy="312.500" rx="97" ry="97.500" />
      <path d="M296 594H529M862 427H910" stroke="#ff8000" />
      <Support x={296} y={594} hatched />
      <Support x={529} y={594} hatched />
      <Support x={862} y={427} />
      <Support x={910} y={427} />
    </g>
    {nodes.map((p) => (
      <g key={p.n}>
        <circle cx={p.x + 0.5} cy={p.y + 0.5} r="3" fill="none" stroke="#000" />
        <text x={p.tx} y={p.ty} fontSize="12" fill="#303030">{p.n}</text>
      </g>
    ))}
    <text x="291" y="134" fontSize="13">System</text>
    <text x="291" y="149" fontSize="13">Ansicht: FE-Netz – 202 Knoten 158 Elemente</text>
    <text x="396" y="617" fontSize="18">LA1</text>
    <text x="869" y="451" fontSize="18">LA2</text>
    <text transform="translate(377 320) rotate(-90)" fontSize="12" fill="#402040">A1</text>
  </svg>
);

const Coord = ({ name, value, disabled }) => (
  <div className="flex items-center">
    <label className="flex w-[18px] flex-col items-start text-[10px] leading-[9px] font-bold">
      <input
        type="checkbox"
        disabled={disabled}
        defaultChecked={disabled}
        aria-label={`${name} sperren`}
        className={clsx("h-[10px] w-[10px] appearance-none border", disabled ? "border-[#a0a0a0] bg-[#b8b8b8]" : "border-black bg-white")}
      />
      <span className={disabled ? "text-[#909090]" : "text-black"}>{name}:</span>
    </label>
    <input
      aria-label={name}
      defaultValue={value}
      disabled={disabled}
      className={clsx(
        "h-5 w-[57px] border border-[#646464] pr-1 text-right outline-none",
        disabled ? "bg-[#f0f0f0] text-[#808080]" : "bg-white"
      )}
    />
  </div>
);

const StatusBar = () => (
  <footer className="flex h-6 shrink-0 items-center border-t border-[#d8d8d8] bg-[#f0f0f0] pl-[2px]">
    <span className="flex-1">Zum Verkleinern linke Maustaste drücken</span>
    <div className="flex gap-[6px]">
      <Coord name="X" value="3,73" />
      <Coord name="Y" value="3,17" />
      <Coord name="Z" value="0,00" disabled />
    </div>
    <span className="ml-[5px] w-[19px]">m</span>
    <span className="w-[18px]">CS</span>
    <span className="flex h-5 w-[22px] border-x border-[#d8d8d8]" />
    <span className="w-[35px] text-center">NUM</span>
    <span className="flex h-5 w-[22px] border-x border-[#d8d8d8]" />
    <svg width="19" height="20" viewBox="0 0 19 20" className="text-[#b8b8b8]" fill="currentColor">
      <path d="M15 9h2v2h-2zM15 13h2v2h-2zM15 17h2v2h-2zM11 13h2v2h-2zM11 17h2v2h-2zM7 17h2v2H7z" />
    </svg>
  </footer>
);

const App = () => {
  return (
    <div className="flex h-screen flex-col overflow-hidden border border-[#1f3864] bg-white font-[Roboto,sans-serif] text-[12px] leading-4 text-black">
      <header className="flex h-[29px] shrink-0 items-center">
        <span className="ml-2 flex h-4 w-4 items-center justify-center bg-[#484848] text-[6px] leading-none font-bold text-white">SCN</span>
        <h1 className="ml-[5px] flex-1">
          SCN-Rechteckscheibe* (Projekt: Beispiele FRILO-Lösungen) - SCN Scheiben mit finiten Elementen 01/2022 - [Grafik]
        </h1>
        <button type="button" aria-label="Minimieren" className="flex w-[45px] justify-center">
          <svg width="11" height="11" viewBox="0 0 11 11"><path d="M0 5.500h11" stroke="#000" /></svg>
        </button>
        <button type="button" aria-label="Maximieren" className="flex w-[46px] justify-center">
          <svg width="11" height="11" viewBox="0 0 11 11"><path d="M.5.5h10v10H.5z" fill="none" stroke="#000" /></svg>
        </button>
        <button type="button" aria-label="Fenster schließen" className="flex w-[46px] justify-center">
          <svg width="11" height="11" viewBox="0 0 11 11"><path d="M.5.5l10 10M10.500.5l-10 10" stroke="#000" /></svg>
        </button>
      </header>

      <nav className="flex h-[21px] shrink-0 items-center border-b border-[#f0f0f0] pt-[2px]">
        <svg width="16" height="16" viewBox="0 0 16 16" className="ml-2 shrink-0">
          <path d="M8 1l7 3v8l-7 4-7-4V4z" fill="#8ea6cf" />
          <path d="M8 1l7 3-7 3.500L1 4z" fill="#b9c9e4" />
          <path d="M8 7.500L15 4v8l-7 4z" fill="#5f7fb5" />
          <path d="M1 6.500l7 3.500 7-3.500M1 9.500L8 13l7-3.500M4.500 2.500v11.500M11.500 2.500v11.500" stroke="#dfe7f4" strokeWidth=".5" fill="none" />
        </svg>
        {menu.map((m) => (
          <button type="button" key={m} className="pr-[7px] pl-[6px] whitespace-nowrap">
            {m}
          </button>
        ))}
        <div className="mr-px ml-auto flex gap-px text-[#6b7b8c]">
          <button type="button" aria-label="Grafik minimieren" className="flex h-[18px] w-[18px] items-center justify-center border border-[#e4e4e4]">
            <svg width="8" height="8" viewBox="0 0 8 8"><path d="M1 6.500h6" stroke="currentColor" strokeWidth="2" /></svg>
          </button>
          <button type="button" aria-label="Grafik wiederherstellen" className="flex h-[18px] w-[18px] items-center justify-center border border-[#e4e4e4]">
            <svg width="9" height="9" viewBox="0 0 9 9" fill="none" stroke="currentColor"><path d="M2.500 3V1h6v4H7M.5 3.500h6v5h-6z" /><path d="M.5 4h6M2.500 1h6" strokeWidth="1.500" /></svg>
          </button>
          <button type="button" aria-label="Grafik schließen" className="flex h-[18px] w-[18px] items-center justify-center border border-[#e4e4e4]">
            <svg width="8" height="8" viewBox="0 0 8 8"><path d="M1 1l6 6M7 1L1 7" stroke="currentColor" strokeWidth="2" /></svg>
          </button>
        </div>
      </nav>

      <div className="flex flex-col gap-px pb-px">
        <div className="flex">
          {toolRowOne.map((g, i) => (
            <Group key={i} wide={g.wide}>
              {g.items.map((t, k) => (t ? <Tool key={k} icon={t[0]} label={t[1]} active={t[2]} /> : <Sep key={k} />))}
              {g.combo && <Combo label="Ansicht" value="System" className="w-[160px] border border-[#7a7a7a] bg-white pl-[7px]" />}
            </Group>
          ))}
        </div>
        <div className="flex">
          <Group>
            <Tool icon="layersEye" label="Folien anzeigen" active />
            <Tool icon="layers" label="Folien" />
          </Group>
          <Group wide>
            <Tool icon="note" label="Notiz" />
            <Tool icon="fontBig" label="Schrift größer" />
            <Tool icon="fontSmall" label="Schrift kleiner" />
            <Tool icon="dimension" label="Bemaßung" />
            <Tool icon="ruler" label="Messen" />
            <Tool icon="loadsEye" label="Lasten anzeigen" />
            <Tool icon="calc" label="Rechner" />
          </Group>
          <Group wide>
            <Combo label="Art" value="Lastfall:" arrow="#b0b0b0" className="w-[175px] border border-[#e0e0e0] bg-white pl-[4px]" />
            <Combo label="Lastfall" value="1: Lastfall G (Ge:0)" className="w-[175px] border border-[#7a7a7a] bg-white pl-[10px]" />
          </Group>
          <Group>
            <Tool icon="meshGrey" label="Netz" />
            <Tool icon="meshDelete" label="Netz löschen" />
          </Group>
          <Group wide>
            <Tool label="System" active><SysIcon /></Tool>
            {resultTools.map(([icon, label]) => <Tool key={icon} icon={icon} label={label} />)}
          </Group>
        </div>
      </div>

      <main className="flex min-h-0 flex-1">
        <LeftDock />

        <div className="w-[33px] shrink-0 pb-[2px]">
          <div className="flex w-[31px] flex-col items-center border-r border-b border-[#a0a0a0] bg-[#f0f0f0] pt-[2px] pb-[7px]">
            <DockGrip />
            <div className="flex flex-col gap-px">
              {drawTools.map(([icon, label]) => <Tool key={icon} icon={icon} label={label} />)}
            </div>
          </div>
        </div>

        <section className="mb-[2px] flex min-w-0 flex-1 flex-col border-t border-b border-[#a0a0a0] bg-[#f0f0f0]">
          <div className="flex min-h-0 flex-1 flex-col border-r-2 border-black pt-1 pr-[5px] pb-[5px] pl-[5px]">
            <div className="min-h-0 flex-1 overflow-hidden border-t-2 border-r border-b border-l-2 border-t-[#696969] border-r-[#e3e3e3] border-b-[#e3e3e3] border-l-[#696969] bg-white">
              <Drawing />
            </div>
          </div>
          <div className="mr-px flex h-[25px] items-start border-r border-[#a0a0a0]">
            <span className="w-1 border-t border-black" />
            <button type="button" className="h-6 w-[93px] border-r border-b-2 border-l border-black border-l-white pt-[3px]">Grafik</button>
            <div className="flex flex-1 border-t border-black">
              <button type="button" className="h-[22px] w-[89px] border-r-2 border-b-2 border-l border-black pt-[2px]">Text</button>
            </div>
          </div>
        </section>

        <div className="w-[30px] shrink-0">
          <div className="flex w-[28px] flex-col items-center border-r border-b border-[#a0a0a0] bg-[#f0f0f0] pt-[2px] pb-[7px]">
            <DockGrip />
            <div className="flex flex-col gap-px">
              <Tool label="System"><SysIcon /></Tool>
              <Tool label="System mit Netz" active>
                <SysIcon>
                  <svg width="16" height="16" viewBox="0 0 16 16" className="absolute" fill="none" stroke="#0000f0"><path d={hash(1.5, 2.5, 13, 11, 4)} /></svg>
                </SysIcon>
              </Tool>
              <Tool label="System mit Lasten">
                <SysIcon>
                  <svg width="16" height="16" viewBox="0 0 16 16" className="absolute" fill="none" stroke="#0000f0"><path d="M0 2.500h16M0 15.500h16M8 0v7M14 3v6" /></svg>
                </SysIcon>
              </Tool>
              <Tool label="System mit DXF">
                <SysIcon>
                  <svg width="16" height="16" viewBox="0 0 16 16" className="absolute" fill="none" stroke="#0000f0"><path d="M0 2.500h6M0 15.500h16" /><path d="M7 1v4M9 1l3 4M12 1L9 5M13.500 5V1.500H16" stroke="#222" /></svg>
                </SysIcon>
              </Tool>
              <Tool label="System mit Schnitt">
                <SysIcon color="#a0a0a0">
                  <svg width="16" height="16" viewBox="0 0 16 16" className="absolute" fill="none" stroke="#a0a0a0"><path d="M6.500 1.500h9v5h-9zM2 15L14 2" /></svg>
                </SysIcon>
              </Tool>
              <Tool icon="gridGrey" label="Raster" />
              <Tool icon="gridIn" label="Raster einlesen" />
              <Tool icon="gridOut" label="Raster ausgeben" />
              <Tool icon="lineGrey" label="Linie" />
              <Tool icon="tableGrey" label="Tabelle" />
            </div>
          </div>
        </div>
      </main>

      <StatusBar />
    </div>
  );
};

export default App;
